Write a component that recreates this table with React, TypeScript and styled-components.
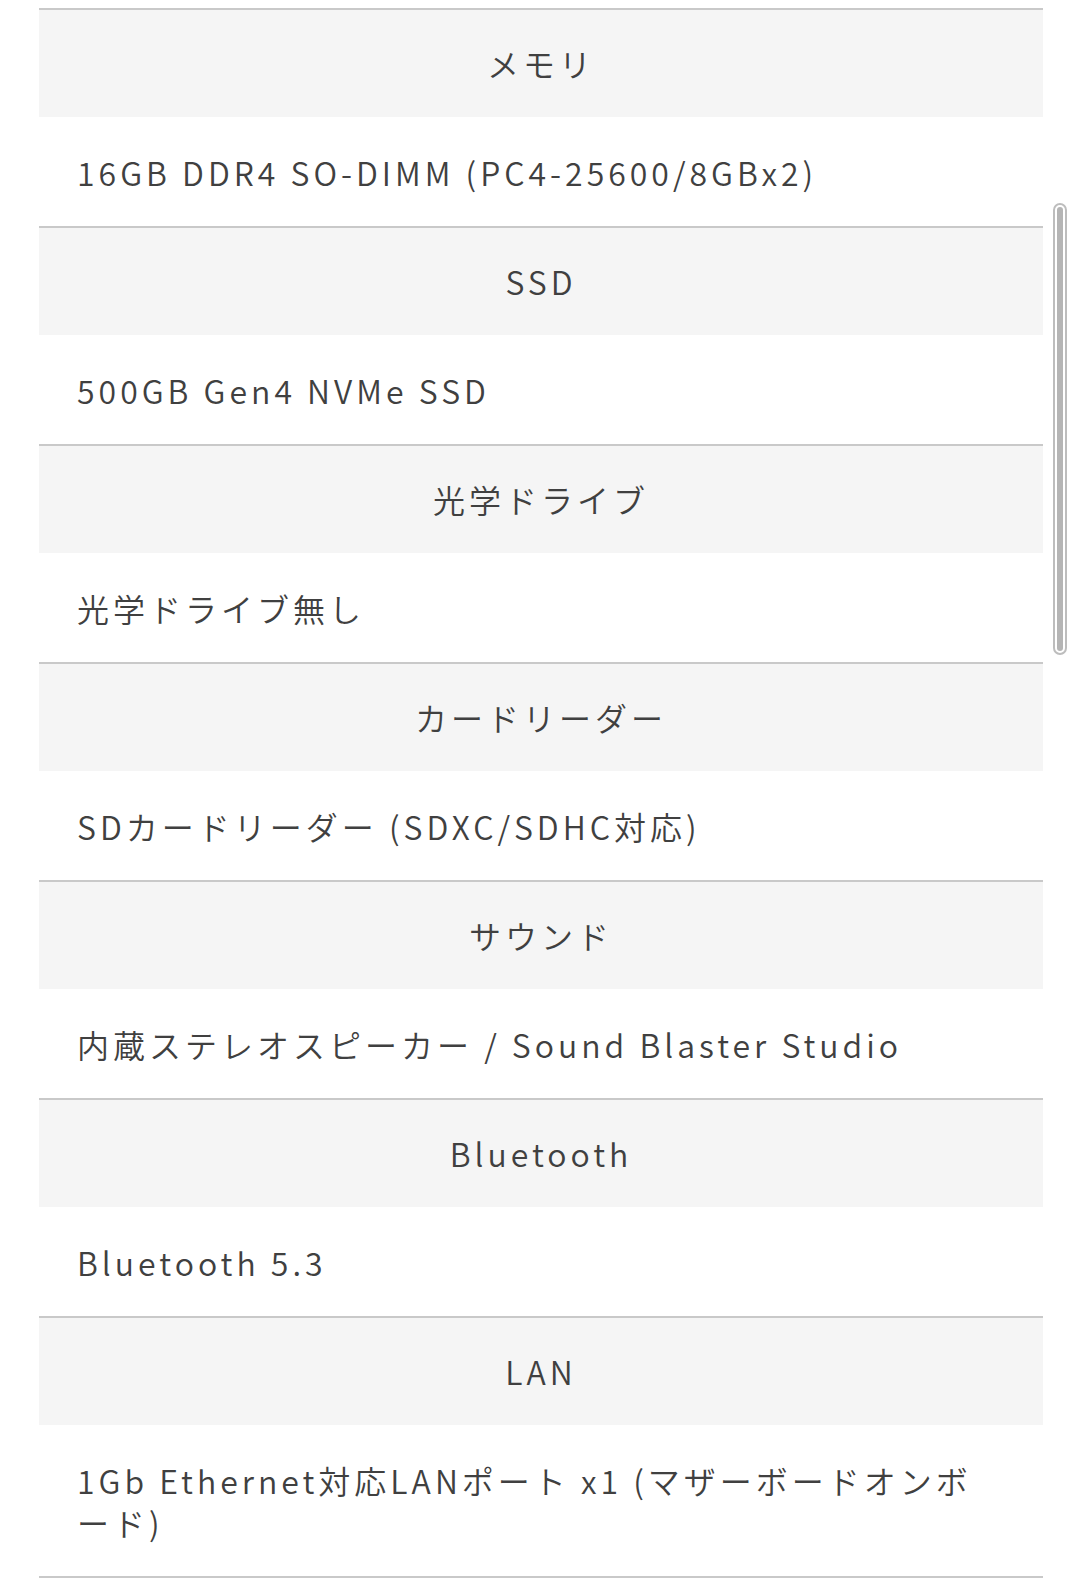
import styled, { createGlobalStyle } from "styled-components";

interface ISpec {
  label: string;
  value: string;
}

const specs: ISpec[] = [
  { label: "メモリ", value: "16GB DDR4 SO-DIMM (PC4-25600/8GBx2)" },
  { label: "SSD", value: "500GB Gen4 NVMe SSD" },
  { label: "光学ドライブ", value: "光学ドライブ無し" },
  { label: "カードリーダー", value: "SDカードリーダー (SDXC/SDHC対応)" },
  { label: "サウンド", value: "内蔵ステレオスピーカー / Sound Blaster Studio" },
  { label: "Bluetooth", value: "Bluetooth 5.3" },
  { label: "LAN", value: "1Gb Ethernet対応LANポート x1 (マザーボードオンボード)" },
];

const App = () => {
  return (
    <Page>
      <GlobalStyle />
      <SpecTable>
        {specs.map((spec) => (
          <Group key={spec.label}>
            <Label>{spec.label}</Label>
            <Value>{spec.value}</Value>
          </Group>
        ))}
      </SpecTable>
      <Scrollbar>
        <Thumb />
      </Scrollbar>
    </Page>
  );
};

const GlobalStyle = createGlobalStyle`
  body {
    margin: 0;
    background: #ffffff;
    font-family: "Noto Sans CJK JP", "Noto Sans", sans-serif;
    font-weight: 350;
    color: #404040;
  }
`;

const Page = styled.main`
  position: relative;
  height: 1584px;
  overflow: hidden;
  padding: 8px 37px 0 39px;
  box-sizing: border-box;
`;

const SpecTable = styled.div`
  display: flex;
  flex-direction: column;
`;

const Group = styled.section`
  border-top: 2px solid #c9c9c9;
  &:last-child {
    border-bottom: 2px solid #c9c9c9;
  }
`;

const Label = styled.div`
  background-color: #f5f5f5;
  text-align: center;
  font-size: 32px;
  line-height: 41px;
  letter-spacing: 0.125em;
  padding: 33px 0;
`;

const Value = styled.div`
  font-size: 32px;
  line-height: 42px;
  letter-spacing: 0.125em;
  padding: 34px 60px 33px 38px;
`;

const Scrollbar = styled.div`
  position: absolute;
  top: 203px;
  left: 1053px;
  width: 14px;
  height: 452px;
  border: 2px solid #bdbdbd;
  border-radius: 8px;
  box-sizing: border-box;
  padding: 2px;
  background: #ffffff;
`;

const Thumb = styled.div`
  height: 100%;
  background: #b5b5b5;
  border-radius: 4px;
`;

export default App;
